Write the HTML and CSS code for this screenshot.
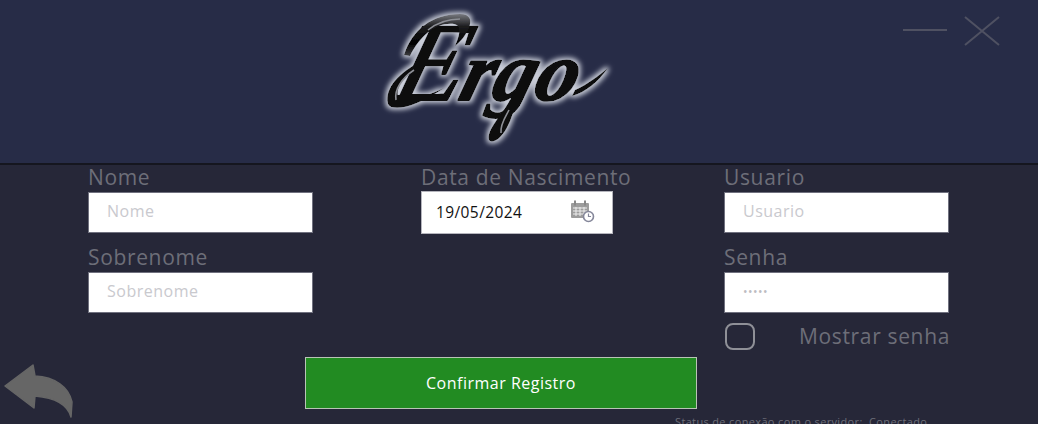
FILE: index.html

```html
<!DOCTYPE html>
<html lang="pt-BR">
<head>
  <meta charset="UTF-8" />
  <title>Ergo - Registro</title>
  <link rel="stylesheet" href="styles.css">
</head>
<body>
  <header class="topo">
    <svg class="logo" width="270" height="163" viewBox="0 0 270 163">
      <defs>
        <linearGradient id="cromo" x1="0" y1="0" x2="0" y2="1">
          <stop offset="0" stop-color="#77797f"/>
          <stop offset="0.3" stop-color="#1c1c1e"/>
          <stop offset="0.7" stop-color="#000"/>
          <stop offset="1" stop-color="#3c3c40"/>
        </linearGradient>
        <filter id="brilho" x="-20%" y="-20%" width="140%" height="140%">
          <feMorphology in="SourceAlpha" operator="dilate" radius="1.5" result="gordo"/>
          <feGaussianBlur in="gordo" stdDeviation="2.4" result="borrado"/>
          <feFlood flood-color="#c9cdd8"/>
          <feComposite in2="borrado" operator="in" result="halo"/>
          <feMerge>
            <feMergeNode in="halo"/>
            <feMergeNode in="SourceGraphic"/>
          </feMerge>
        </filter>
      </defs>
      <g filter="url(#brilho)">
        <text class="logo-texto" fill="#0c0c0e" stroke="#0c0c0e" transform="translate(30 100) skewX(-16)">E<tspan class="logo-resto" dx="-2">rgo</tspan></text>
        <path d="M44 55 C52 30 72 14 100 14 C110 14 113 20 108 30 C104 38 100 42 95 46 C100 34 102 26 94 24 C76 22 60 36 50 56 Z" fill="url(#cromo)"/>
        <path d="M60 62 C40 72 24 88 28 104 C32 112 55 108 84 88 C62 98 42 104 38 96 C36 84 48 72 62 66 Z" fill="#111"/>
        <path d="M150 100 C142 115 126 130 129 140 C134 146 150 134 156 100 Z" fill="#111"/>
        <path d="M215 90 C228 84 238 76 248 68 C238 82 226 92 212 96Z" fill="#111"/>
      </g>
      <path d="M68 30 C78 22 90 19 100 19 M36 100 C34 90 42 78 54 70 M141 133 C140 124 146 116 149 110" stroke="#8d8f96" stroke-width="1.6" fill="none"/>
    </svg>
    <div class="janela">
      <span class="minimizar"></span>
      <svg class="fechar" width="36" height="30" viewBox="0 0 36 30">
        <path d="M1 1 L35 29 M35 1 L1 29" stroke="#4f5162" stroke-width="2" fill="none"/>
      </svg>
    </div>
  </header>

  <main class="form">
    <div class="coluna">
      <div class="campo">
        <label>Nome</label>
        <input type="text" placeholder="Nome">
      </div>
      <div class="campo">
        <label>Sobrenome</label>
        <input type="text" placeholder="Sobrenome">
      </div>
    </div>

    <div class="coluna">
      <div class="campo">
        <label>Data de Nascimento</label>
        <div class="data">
          <span>19/05/2024</span>
          <svg width="25" height="23" viewBox="0 0 25 23">
            <rect x="1" y="3" width="18" height="15" rx="1" fill="#9c9c9c"/>
            <rect x="4" y="0.5" width="2" height="5" fill="#888"/>
            <rect x="14" y="0.5" width="2" height="5" fill="#888"/>
            <path d="M3 8h14M3 11h14M3 14h14M6 7v9M10 7v9M14 7v9" stroke="#eee" stroke-width="1" fill="none"/>
            <circle cx="18.5" cy="16.5" r="5" fill="#fff" stroke="#85879a" stroke-width="1.6"/>
            <path d="M18.5 13.5V16.5h2.5" stroke="#85879a" stroke-width="1.2" fill="none"/>
          </svg>
        </div>
      </div>
    </div>

    <div class="coluna">
      <div class="campo">
        <label>Usuario</label>
        <input type="text" placeholder="Usuario">
      </div>
      <div class="campo">
        <label>Senha</label>
        <input type="password" value="12345" class="senha">
      </div>
      <div class="mostrar">
        <span class="caixa"></span>
        <span>Mostrar senha</span>
      </div>
    </div>
  </main>

  <footer class="rodape">
    <svg class="voltar" width="76" height="60" viewBox="0 0 76 60">
      <path d="M5 26 L33 5 L35 16 C55 17 69 27 72 42 L71 57 C68 46 58 38 35 36 L34 48 Z" fill="#666" stroke="#666" stroke-width="1.5" stroke-linejoin="round"/>
    </svg>
    <button class="confirmar">Confirmar Registro</button>
    <div class="status">Status de conexão com o servidor:&nbsp; Conectado</div>
  </footer>
</body>
</html>
```

FILE: styles.css

```css
html, body {
  height: 100%;
}

body {
  margin: 0;
  background-color: #262738;
  font-family: "Open Sans", sans-serif;
  overflow: hidden;
}

.topo {
  height: 163px;
  background-color: #272c47;
  border-bottom: 2px solid #15161f;
  display: grid;
  grid-template-columns: 360px 270px 1fr;
}

.logo {
  grid-column: 2;
}

.logo-texto {
  font-family: "Liberation Serif", serif;
  font-style: italic;
  font-size: 112px;
  stroke-width: 2px;
  stroke-linejoin: round;
}

.logo-resto {
  font-weight: bold;
  font-size: 84px;
}

.janela {
  display: flex;
  align-items: flex-start;
  padding: 16px 38px 0 0;
  justify-content: flex-end;
  gap: 17px;
}

.minimizar {
  width: 44px;
  height: 2px;
  margin-top: 13px;
  background-color: #4f5162;
}

.form {
  display: grid;
  grid-template-columns: 333px 303px 225px;
  padding-left: 88px;
  height: 192px;
}

.campo {
  margin-bottom: 12px;
}

.campo label {
  display: block;
  height: 24px;
  margin-bottom: 3px;
  line-height: 24px;
  font-size: 21px;
  letter-spacing: 0.65px;
  color: #6d6e78;
}

.campo input {
  display: block;
  width: 225px;
  height: 41px;
  box-sizing: border-box;
  padding: 0 18px 4px;
  border: 1px solid #70717f;
  background-color: #fff;
  font-family: inherit;
  font-size: 16px;
  letter-spacing: 0.5px;
  outline: none;
}

.campo input::placeholder {
  color: #c9c9ce;
  opacity: 1;
}

.campo .senha {
  color: #bdbdc2;
  font-size: 12px;
  padding-bottom: 2px;
}

.data {
  width: 192px;
  height: 43px;
  margin-top: -1px;
  box-sizing: border-box;
  padding: 0 17px 2px 14px;
  border: 1px solid #b5b5bd;
  background-color: #fff;
  display: flex;
  align-items: center;
  justify-content: space-between;
  font-size: 15.5px;
  letter-spacing: 0.4px;
  color: #111;
}

.mostrar {
  display: flex;
  align-items: center;
  gap: 44px;
  margin-top: -3px;
  padding-left: 1px;
  font-size: 21px;
  letter-spacing: 0.65px;
  color: #6d6e78;
  white-space: nowrap;
}

.caixa {
  width: 26px;
  height: 23px;
  flex-shrink: 0;
  border: 2px solid #8f9097;
  border-radius: 8px;
}

.rodape {
  display: grid;
  grid-template-columns: 305px 392px 1fr;
}

.voltar {
  margin-top: 3px;
}

.confirmar {
  height: 52px;
  border: 1px solid #b9c4b6;
  background-color: #228b22;
  color: #fff;
  font-family: inherit;
  font-size: 16px;
  letter-spacing: 0.5px;
}

.status {
  margin-top: 58px;
  margin-left: -22px;
  font-size: 11px;
  letter-spacing: 0.35px;
  line-height: 14px;
  color: #6d6e78;
  white-space: nowrap;
}
```
